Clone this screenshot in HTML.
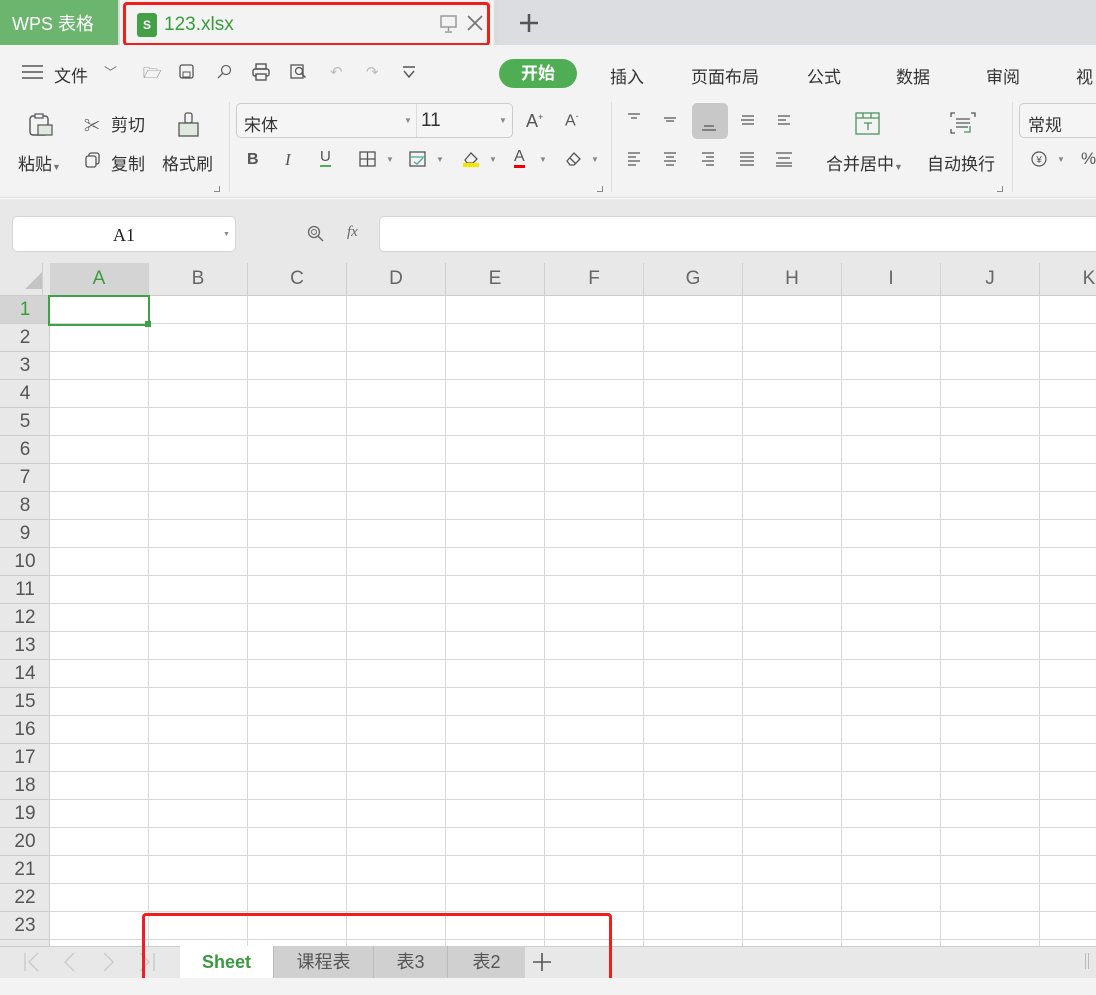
<!DOCTYPE html>
<html><head><meta charset="utf-8"><style>
*{margin:0;padding:0;box-sizing:border-box}
body{width:1096px;height:995px;overflow:hidden;position:relative;background:#fff;font-family:"Liberation Sans","Noto Sans CJK SC",sans-serif;color:#333}
.a{position:absolute;white-space:nowrap}
.t{font-size:17px;color:#333}
.ic{position:absolute;color:#555;font-size:15px}
</style></head><body>
<div class="a" style="left:0;top:0;width:1096px;height:45px;background:#dadbdd"></div>
<div class="a" style="left:0;top:0;width:118px;height:45px;background:#6cb56f;color:#fff;font-size:18px;line-height:48px;padding-left:12px">WPS 表格</div>
<div class="a" style="left:120px;top:0;width:374px;height:45px;background:#f3f3f3"></div>
<div class="a" style="left:123px;top:2px;width:367px;height:44px;border:3px solid #f21d1d;border-radius:4px"></div>
<div class="a" style="left:137px;top:13px;width:20px;height:24px;background:#43a047;border-radius:3px;color:#fff;font-size:12px;font-weight:bold;text-align:center;line-height:24px">S</div>
<div class="a" style="left:164px;top:14px;font-size:19px;color:#3a9b3e">123.xlsx</div>
<svg class="a" style="left:440px;top:15px" width="18" height="18"><rect x="1" y="1" width="15" height="11" fill="none" stroke="#999" stroke-width="1.5"/><path d="M8.5 12v4M5 17h7" stroke="#999" stroke-width="1.5"/></svg>
<svg class="a" style="left:466px;top:14px" width="18" height="18"><path d="M2 2l14 14M16 2L2 16" stroke="#777" stroke-width="1.8"/></svg>
<div class="a" style="left:498px;top:0;width:598px;height:45px;background:#dcdde0"></div>
<svg class="a" style="left:519px;top:13px" width="20" height="20"><path d="M10 1v18M1 10h18" stroke="#555" stroke-width="2.5"/></svg>
<div class="a" style="left:0;top:45px;width:1096px;height:153px;background:#f3f3f3;border-bottom:1px solid #ddd"></div>
<svg class="a" style="left:22px;top:64px" width="22" height="16"><path d="M0 2h21M0 8h21M0 14h21" stroke="#555" stroke-width="1.6"/></svg>
<div class="a t" style="left:54px;top:62px">文件</div>
<div class="a" style="left:104px;top:62px;color:#777;font-size:13px">﹀</div>
<div class="ic" style="left:143px;top:63px">🗁</div>
<svg class="a" style="left:179px;top:64px" width="16" height="16"><rect x="1" y="1" width="13" height="13" rx="2" fill="none" stroke="#555" stroke-width="1.3"/><rect x="4" y="8" width="7" height="5" fill="none" stroke="#555"/></svg>
<svg class="a" style="left:216px;top:64px" width="16" height="16"><circle cx="10" cy="6" r="4.5" fill="none" stroke="#666" stroke-width="1.3"/><path d="M7 9L2 14" stroke="#666" stroke-width="1.3"/></svg>
<svg class="a" style="left:252px;top:63px" width="18" height="18"><rect x="4" y="1" width="10" height="5" fill="none" stroke="#555" stroke-width="1.4"/><rect x="1" y="6" width="16" height="7" rx="2" fill="none" stroke="#555" stroke-width="1.4"/><rect x="4" y="11" width="10" height="6" fill="#f3f3f3" stroke="#555" stroke-width="1.4"/></svg>
<svg class="a" style="left:290px;top:64px" width="18" height="16"><rect x="1" y="1" width="12" height="13" fill="none" stroke="#555" stroke-width="1.3"/><circle cx="9" cy="7" r="3.5" fill="none" stroke="#555" stroke-width="1.3"/><path d="M11.5 9.5l4 4" stroke="#555" stroke-width="1.4"/></svg>
<div class="ic" style="left:330px;top:63px;color:#bbb">↶</div>
<div class="ic" style="left:366px;top:63px;color:#bbb">↷</div>
<svg class="a" style="left:402px;top:66px" width="14" height="14"><path d="M1 1h12M2 5l5 6 5-6" fill="none" stroke="#555" stroke-width="1.4"/></svg>
<div class="a" style="left:499px;top:59px;width:78px;height:29px;border-radius:15px;background:#4fae54;color:#fff;font-size:17px;font-weight:bold;text-align:center;line-height:29px">开始</div>
<div class="a t" style="left:610px;top:63px">插入</div>
<div class="a t" style="left:691px;top:63px">页面布局</div>
<div class="a t" style="left:807px;top:63px">公式</div>
<div class="a t" style="left:896px;top:63px">数据</div>
<div class="a t" style="left:986px;top:63px">审阅</div>
<div class="a t" style="left:1076px;top:63px">视</div>
<svg class="a" style="left:28px;top:112px" width="26" height="26"><rect x="2" y="4" width="18" height="19" rx="3" fill="none" stroke="#555" stroke-width="1.4"/><rect x="7" y="2" width="8" height="4" fill="#f3f3f3" stroke="#555" stroke-width="1.2"/><rect x="10" y="13" width="14" height="10" fill="#dfe9df" stroke="#555" stroke-width="1.2"/></svg>
<div class="a" style="left:18px;top:150px;font-size:17px">粘贴<span style="font-size:9px;color:#777">▼</span></div>
<div class="a" style="left:84px;top:112px;font-size:16px;color:#555">✂</div>
<div class="a t" style="left:111px;top:111px">剪切</div>
<svg class="a" style="left:85px;top:152px" width="16" height="16"><rect x="4" y="1" width="10" height="11" rx="2" fill="none" stroke="#555" stroke-width="1.3"/><rect x="1" y="4" width="10" height="11" rx="2" fill="#f3f3f3" stroke="#555" stroke-width="1.3"/></svg>
<div class="a t" style="left:111px;top:150px">复制</div>
<svg class="a" style="left:177px;top:112px" width="24" height="26"><rect x="8" y="1" width="7" height="10" rx="2" fill="none" stroke="#555" stroke-width="1.3"/><rect x="2" y="11" width="19" height="13" fill="#dfe9df" stroke="#555" stroke-width="1.3"/></svg>
<div class="a t" style="left:162px;top:150px">格式刷</div>
<div class="a" style="left:229px;top:102px;width:1px;height:90px;background:#ddd"></div>
<div class="a" style="left:236px;top:103px;width:277px;height:35px;border:1px solid #ccc;border-radius:5px;background:#f5f5f5"></div>
<div class="a" style="left:416px;top:104px;width:1px;height:33px;background:#ddd"></div>
<div class="a t" style="left:244px;top:111px">宋体</div>
<div class="a" style="left:404px;top:116px;font-size:8px;color:#888">▼</div>
<div class="a" style="left:421px;top:110px;font-size:19px;color:#333">11</div>
<div class="a" style="left:499px;top:116px;font-size:8px;color:#888">▼</div>
<div class="a" style="left:526px;top:111px;font-size:18px;color:#555">A<sup style="font-size:9px">+</sup></div>
<div class="a" style="left:565px;top:111px;font-size:16px;color:#555">A<sup style="font-size:9px">-</sup></div>
<div class="a" style="left:247px;top:151px;font-size:16px;font-weight:bold;color:#555">B</div>
<div class="a" style="left:285px;top:150px;font-size:17px;font-style:italic;color:#555;font-family:'Liberation Serif',serif">I</div>
<div class="a" style="left:320px;top:149px;font-size:15px;color:#555;border-bottom:2px solid #4fae54;line-height:16px">U</div>
<svg class="a" style="left:359px;top:151px" width="18" height="16"><rect x="1" y="1" width="15" height="14" fill="none" stroke="#555" stroke-width="1.3"/><path d="M8.5 1v14M1 8h15" stroke="#555" stroke-width="1.3"/></svg>
<div class="a" style="left:386px;top:155px;font-size:8px;color:#888">▼</div>
<svg class="a" style="left:409px;top:151px" width="18" height="16"><rect x="1" y="1" width="15" height="14" fill="none" stroke="#555" stroke-width="1.3"/><path d="M1 6h15M5 11l3 2 6-6" stroke="#4a9" stroke-width="1.3" fill="none"/></svg>
<div class="a" style="left:436px;top:155px;font-size:8px;color:#888">▼</div>
<svg class="a" style="left:462px;top:150px" width="18" height="18"><path d="M3 10l6-7 6 6-4 4H5z" fill="none" stroke="#555" stroke-width="1.3"/><rect x="1" y="13" width="16" height="4" fill="#f5e600"/></svg>
<div class="a" style="left:489px;top:155px;font-size:8px;color:#888">▼</div>
<div class="a" style="left:514px;top:148px;font-size:16px;color:#555;border-bottom:3px solid #e00;line-height:17px">A</div>
<div class="a" style="left:539px;top:155px;font-size:8px;color:#888">▼</div>
<svg class="a" style="left:565px;top:151px" width="18" height="16"><path d="M2 10l7-8 6 6-6 6H5z M5 7l6 6" fill="none" stroke="#555" stroke-width="1.3"/></svg>
<div class="a" style="left:591px;top:155px;font-size:8px;color:#888">▼</div>
<div class="a" style="left:611px;top:102px;width:1px;height:90px;background:#ddd"></div>
<div class="a" style="left:692px;top:103px;width:36px;height:36px;background:#c8c8c8;border-radius:5px"></div>
<svg class="a" style="left:620px;top:105px" width="190" height="70" stroke="#555" stroke-width="1.2" fill="none">
<path d="M8 9h12M11 13h6"/><path d="M44 13h12M46 16h8"/><path d="M84 21h10M82 25h14"/>
<path d="M122 11h12M126 15h8M122 19h12M129 15h-8" /><path d="M158 11h12M158 15h8M158 19h12M158 15h7"/>
<path d="M8 48h12M8 52h8M8 56h12M8 60h8"/><path d="M44 48h12M46 52h8M44 56h12M46 60h8"/>
<path d="M82 48h12M86 52h8M82 56h12M86 60h8"/><path d="M120 48h14M120 52h14M120 56h14M120 60h14"/>
<path d="M156 48h16M156 58h16M156 61h16M158 53h12"/></svg>
<svg class="a" style="left:855px;top:112px" width="26" height="24"><rect x="1" y="1" width="23" height="21" fill="none" stroke="#4a9660" stroke-width="1.3"/><path d="M1 6h23M8 1v5M16 1v5M9 11h8M13 11v7" stroke="#4a9660" stroke-width="1.3"/></svg>
<div class="a t" style="left:826px;top:150px">合并居中<span style="font-size:9px;color:#777">▼</span></div>
<svg class="a" style="left:950px;top:112px" width="26" height="24" fill="none" stroke="#555" stroke-width="1.3"><path d="M1 5V1h4M21 1h4v4M1 17v4h4M6 7h14M6 11h14M6 15h12"/><path d="M20 14v6h-6" stroke="#4a9660"/></svg>
<div class="a t" style="left:927px;top:150px">自动换行</div>
<div class="a" style="left:1012px;top:102px;width:1px;height:90px;background:#ddd"></div>
<div class="a" style="left:1019px;top:103px;width:90px;height:35px;border:1px solid #ccc;border-radius:5px;background:#f5f5f5"></div>
<div class="a t" style="left:1028px;top:111px">常规</div>
<svg class="a" style="left:1031px;top:151px" width="16" height="16"><circle cx="8" cy="8" r="7" fill="none" stroke="#555" stroke-width="1.2"/><text x="8" y="12" font-size="10" text-anchor="middle" fill="#555">¥</text></svg>
<div class="a" style="left:1057px;top:155px;font-size:8px;color:#888">▼</div>
<div class="a" style="left:1081px;top:149px;font-size:17px;color:#555">%</div>
<div class="a" style="left:214px;top:186px;width:6px;height:6px;border-right:1px solid #888;border-bottom:1px solid #888"></div>
<div class="a" style="left:597px;top:186px;width:6px;height:6px;border-right:1px solid #888;border-bottom:1px solid #888"></div>
<div class="a" style="left:997px;top:186px;width:6px;height:6px;border-right:1px solid #888;border-bottom:1px solid #888"></div>
<div class="a" style="left:0;top:199px;width:1096px;height:64px;background:#e8e8e8"></div>
<div class="a" style="left:12px;top:216px;width:224px;height:36px;background:#fff;border:1px solid #d5d5d5;border-radius:5px;text-align:center;line-height:36px;font-family:'Liberation Serif',serif;font-size:18px;color:#222">A1</div>
<div class="a" style="left:223px;top:231px;font-size:7px;color:#888">▼</div>
<svg class="a" style="left:307px;top:225px" width="18" height="18"><circle cx="7" cy="7" r="5.5" fill="none" stroke="#666" stroke-width="1.3"/><circle cx="7" cy="7" r="2.5" fill="none" stroke="#666"/><path d="M11 11l5 5" stroke="#666" stroke-width="1.5"/></svg>
<div class="a" style="left:347px;top:224px;font-size:15px;font-style:italic;color:#666;font-family:'Liberation Serif',serif">fx</div>
<div class="a" style="left:379px;top:216px;width:730px;height:36px;background:#fff;border:1px solid #d5d5d5;border-radius:5px"></div>
<div class="a" style="left:0;top:263px;width:1096px;height:33px;background:#e8e8e8;border-bottom:1px solid #ccc"></div>
<div class="a" style="left:50px;top:263px;width:98px;height:33px;background:#d4d4d4"></div>
<svg class="a" style="left:25px;top:272px" width="18" height="18"><path d="M17 0V17H0z" fill="#c4c4c4"/></svg>
<div class="a" style="left:0;top:263px;width:1096px;height:33px;background:repeating-linear-gradient(90deg,transparent 0 98px,#d0d0d0 98px 99px);background-position:50px 0;background-repeat:repeat-x"></div>
<div class="a" style="left:0;top:296px;width:50px;height:650px;background:#e8e8e8;border-right:1px solid #ccc"></div>
<div class="a" style="left:0;top:296px;width:50px;height:28px;background:#d4d4d4"></div>
<div class="a" style="left:50px;top:296px;width:1046px;height:650px;background-image:repeating-linear-gradient(90deg,transparent 0 98px,#d8d8d8 98px 99px),repeating-linear-gradient(180deg,transparent 0 27px,#d8d8d8 27px 28px)"></div>
<div class="a" style="left:0;top:296px;width:50px;height:650px;background-image:repeating-linear-gradient(180deg,transparent 0 27px,#ccc 27px 28px)"></div>
<div id="cols" style="font-size:19px;color:#555"></div>
<div class="a" style="left:48px;top:295px;width:102px;height:31px;border:2px solid #3fa046"></div>
<div class="a" style="left:145px;top:321px;width:6px;height:6px;background:#3fa046"></div>
<div class="a" style="left:0;top:946px;width:1096px;height:32px;background:#e8e8e8;border-top:1px solid #ccc"></div>
<svg class="a" style="left:20px;top:950px" width="140" height="24" fill="none" stroke="#ccc" stroke-width="1.5"><path d="M5 3v18M18 3l-9 9 9 9"/><path d="M54 3l-9 9 9 9"/><path d="M84 3l9 9-9 9"/><path d="M120 3l9 9-9 9M134 3v18"/></svg>
<div class="a" style="left:180px;top:946px;width:93px;height:32px;background:#fff;color:#3a9b3e;font-weight:bold;font-size:18px;text-align:center;line-height:33px">Sheet</div>
<div class="a" style="left:273px;top:946px;width:100px;height:32px;background:#d0d0d0;border-left:1px solid #bbb;text-align:center;line-height:33px;font-size:18px;color:#555">课程表</div>
<div class="a" style="left:373px;top:946px;width:74px;height:32px;background:#d0d0d0;border-left:1px solid #bbb;text-align:center;line-height:33px;font-size:18px;color:#555">表3</div>
<div class="a" style="left:447px;top:946px;width:78px;height:32px;background:#d0d0d0;border-left:1px solid #bbb;text-align:center;line-height:33px;font-size:18px;color:#555">表2</div>
<svg class="a" style="left:532px;top:952px" width="20" height="20"><path d="M10 1v18M1 10h18" stroke="#555" stroke-width="1.6"/></svg>
<div class="a" style="left:1085px;top:953px;width:4px;height:16px;border-left:1px solid #bbb;border-right:1px solid #bbb"></div>
<div class="a" style="left:142px;top:913px;width:470px;height:75px;border:3px solid #f21d1d;border-radius:4px"></div>
<div class="a" style="left:0;top:978px;width:1096px;height:17px;background:#f3f3f3"></div>
<script>
var h='',L='ABCDEFGHIJK';
for(var i=0;i<11;i++){h+='<div class="a" style="left:'+(50+i*99)+'px;top:268px;width:98px;text-align:center;color:'+(i==0?'#3a9b3e':'#666')+'">'+L[i]+'</div>';}
for(var r=1;r<=23;r++){h+='<div class="a" style="left:0;top:'+(299+(r-1)*28)+'px;width:50px;text-align:center;'+(r==1?'color:#3a9b3e':'')+'">'+r+'</div>';}
document.getElementById('cols').innerHTML=h;
</script>
</body></html>
